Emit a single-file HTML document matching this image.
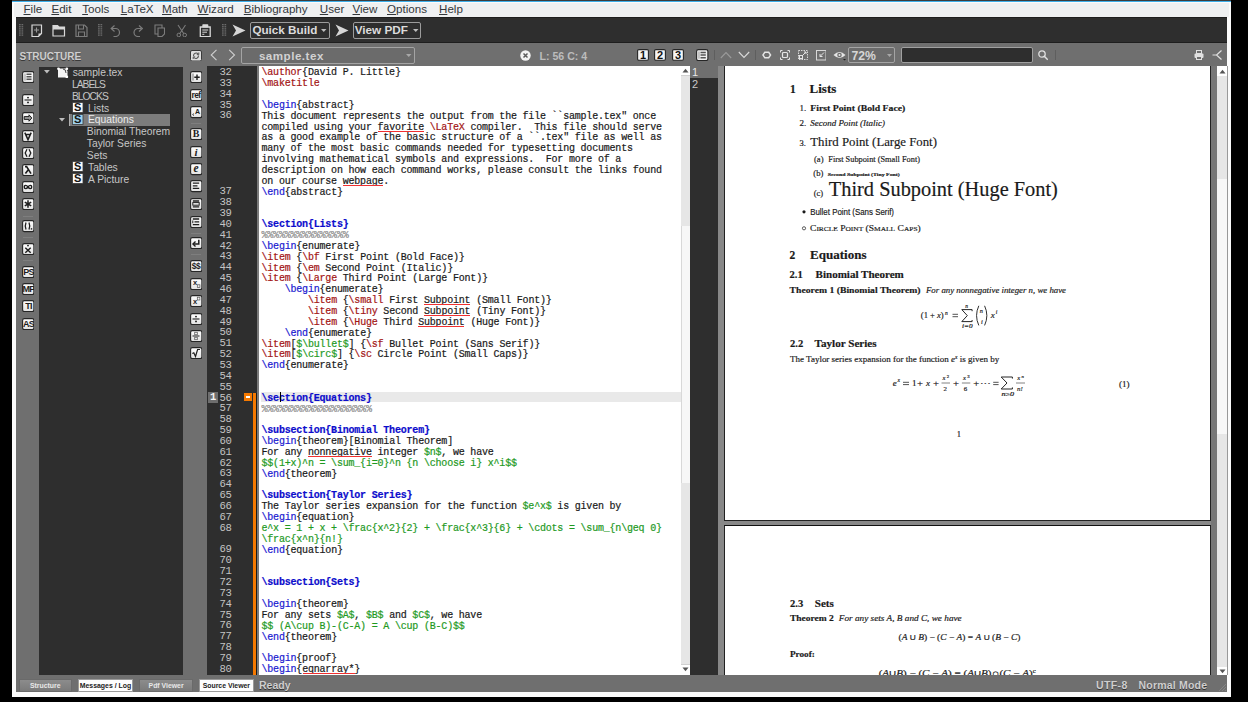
<!DOCTYPE html><html><head><meta charset="utf-8"><style>
*{margin:0;padding:0;box-sizing:border-box}
body{width:1248px;height:702px;background:#000;position:relative;overflow:hidden;font-family:"Liberation Sans",sans-serif}
body div{position:absolute;white-space:pre}
.mono{font-family:"Liberation Mono",monospace;font-size:10px;letter-spacing:-0.2px;line-height:11px;color:#1a1a1a;-webkit-text-stroke:0.2px currentColor}
.ln{font-family:"Liberation Mono",monospace;font-size:10.6px;letter-spacing:-0.4px;line-height:11px;color:#c4c4c4;text-align:right;width:30px}
.c{color:#a31515}
.b{color:#1a1ad0}
.s{color:#0c0ccc;font-weight:bold}
.g{color:#1f9a1f}
.p{color:#8a8a8a}
.u{}
</style></head><body><div style="left:12px;top:0px;width:1219px;height:1px;background:#3c3c3c"></div>
<div style="left:12px;top:1px;width:1219px;height:1px;background:#3daee9"></div>
<div style="left:12px;top:2px;width:1219px;height:695px;background:#fbfbfb"></div>
<div style="left:14px;top:3px;width:1215px;height:14px;background:#eff0f1"></div>
<div style="left:16px;top:17.3px;width:1211px;height:25.7px;background:#2e2e2e;border-top:1px solid #1e1e1e;border-bottom:1px solid #1e1e1e"></div>
<div style="left:16px;top:43px;width:1211px;height:649px;background:#6f6f6f"></div>
<div style="left:23.5px;top:1.6px;font-size:11.6px;color:#33373b;line-height:14px"><span style="text-decoration:underline;text-underline-offset:1.2px">F</span>ile</div>
<div style="left:51.4px;top:1.6px;font-size:11.6px;color:#33373b;line-height:14px"><span style="text-decoration:underline;text-underline-offset:1.2px">E</span>dit</div>
<div style="left:82.2px;top:1.6px;font-size:11.6px;color:#33373b;line-height:14px"><span style="text-decoration:underline;text-underline-offset:1.2px">T</span>ools</div>
<div style="left:120.7px;top:1.6px;font-size:11.6px;color:#33373b;line-height:14px"><span style="text-decoration:underline;text-underline-offset:1.2px">L</span>aTeX</div>
<div style="left:162px;top:1.6px;font-size:11.6px;color:#33373b;line-height:14px"><span style="text-decoration:underline;text-underline-offset:1.2px">M</span>ath</div>
<div style="left:197.6px;top:1.6px;font-size:11.6px;color:#33373b;line-height:14px"><span style="text-decoration:underline;text-underline-offset:1.2px">W</span>izard</div>
<div style="left:243.8px;top:1.6px;font-size:11.6px;color:#33373b;line-height:14px"><span style="text-decoration:underline;text-underline-offset:1.2px">B</span>ibliography</div>
<div style="left:319.8px;top:1.6px;font-size:11.6px;color:#33373b;line-height:14px"><span style="text-decoration:underline;text-underline-offset:1.2px">U</span>ser</div>
<div style="left:352.5px;top:1.6px;font-size:11.6px;color:#33373b;line-height:14px"><span style="text-decoration:underline;text-underline-offset:1.2px">V</span>iew</div>
<div style="left:387px;top:1.6px;font-size:11.6px;color:#33373b;line-height:14px"><span style="text-decoration:underline;text-underline-offset:1.2px">O</span>ptions</div>
<div style="left:439px;top:1.6px;font-size:11.6px;color:#33373b;line-height:14px"><span style="text-decoration:underline;text-underline-offset:1.2px">H</span>elp</div>
<div style="left:19.5px;top:50px;font-size:10px;font-weight:bold;color:#d0d0d0;text-shadow:0 1px 0 #3a3a3a;line-height:14px">STRUCTURE</div>
<div style="left:39px;top:66.5px;width:144px;height:608.5px;background:#2e2e2e"></div>
<div style="left:207px;top:66px;width:50px;height:609px;background:#2e2e2e"></div>
<div style="left:257px;top:66px;width:2px;height:609px;background:#7a7a7a"></div>
<div style="left:259px;top:66px;width:421.5px;height:609px;background:#fff"></div>
<div style="left:261px;top:391.83000000000004px;width:419.5px;height:10.250999999999976px;background:#e9e9e9"></div>
<div class="ln" style="left:201.5px;top:67.00px">32</div>
<div class="mono" style="left:261.5px;top:67.30px"><span class="c">\author</span>{David P. Little}</div>
<div class="ln" style="left:201.5px;top:77.85px">33</div>
<div class="mono" style="left:261.5px;top:78.15px"><span class="c">\maketitle</span></div>
<div class="ln" style="left:201.5px;top:88.70px">34</div>
<div class="ln" style="left:201.5px;top:99.55px">35</div>
<div class="mono" style="left:261.5px;top:99.85px"><span class="b">\begin</span>{abstract}</div>
<div class="ln" style="left:201.5px;top:110.40px">36</div>
<div class="mono" style="left:261.5px;top:110.70px">This document represents the output from the file ``sample.tex" once</div>
<div class="mono" style="left:261.5px;top:121.55px">compiled using your <span class="u">favorite</span> <span class="c">\LaTeX</span> compiler.  This file should serve</div>
<div class="mono" style="left:261.5px;top:132.41px">as a good example of the basic structure of a ``.tex" file as well as</div>
<div class="mono" style="left:261.5px;top:143.26px">many of the most basic commands needed for typesetting documents</div>
<div class="mono" style="left:261.5px;top:154.11px">involving mathematical symbols and expressions.  For more of a</div>
<div class="mono" style="left:261.5px;top:164.96px">description on how each command works, please consult the links found</div>
<div class="mono" style="left:261.5px;top:175.81px">on our course <span class="u">webpage</span>.</div>
<div class="ln" style="left:201.5px;top:186.36px">37</div>
<div class="mono" style="left:261.5px;top:186.66px"><span class="b">\end</span>{abstract}</div>
<div class="ln" style="left:201.5px;top:197.21px">38</div>
<div class="ln" style="left:201.5px;top:208.06px">39</div>
<div class="ln" style="left:201.5px;top:218.91px">40</div>
<div class="mono" style="left:261.5px;top:219.21px"><span class="s">\section{Lists}</span></div>
<div class="ln" style="left:201.5px;top:229.77px">41</div>
<div class="mono" style="left:261.5px;top:230.07px"><span class="p">%%%%%%%%%%%%%%%</span></div>
<div class="ln" style="left:201.5px;top:240.62px">42</div>
<div class="mono" style="left:261.5px;top:240.92px"><span class="b">\begin</span>{enumerate}</div>
<div class="ln" style="left:201.5px;top:251.47px">43</div>
<div class="mono" style="left:261.5px;top:251.77px"><span class="c">\item</span> {<span class="c">\bf</span> First Point (Bold Face)}</div>
<div class="ln" style="left:201.5px;top:262.32px">44</div>
<div class="mono" style="left:261.5px;top:262.62px"><span class="c">\item</span> {<span class="c">\em</span> Second Point (Italic)}</div>
<div class="ln" style="left:201.5px;top:273.17px">45</div>
<div class="mono" style="left:261.5px;top:273.47px"><span class="c">\item</span> {<span class="c">\Large</span> Third Point (Large Font)}</div>
<div class="ln" style="left:201.5px;top:284.02px">46</div>
<div class="mono" style="left:261.5px;top:284.32px">    <span class="b">\begin</span>{enumerate}</div>
<div class="ln" style="left:201.5px;top:294.87px">47</div>
<div class="mono" style="left:261.5px;top:295.17px">        <span class="c">\item</span> {<span class="c">\small</span> First <span class="u">Subpoint</span> (Small Font)}</div>
<div class="ln" style="left:201.5px;top:305.72px">48</div>
<div class="mono" style="left:261.5px;top:306.02px">        <span class="c">\item</span> {<span class="c">\tiny</span> Second <span class="u">Subpoint</span> (Tiny Font)}</div>
<div class="ln" style="left:201.5px;top:316.57px">49</div>
<div class="mono" style="left:261.5px;top:316.87px">        <span class="c">\item</span> {<span class="c">\Huge</span> Third <span class="u">Subpoint</span> (Huge Font)}</div>
<div class="ln" style="left:201.5px;top:327.42px">50</div>
<div class="mono" style="left:261.5px;top:327.72px">    <span class="b">\end</span>{enumerate}</div>
<div class="ln" style="left:201.5px;top:338.28px">51</div>
<div class="mono" style="left:261.5px;top:338.58px"><span class="c">\item</span>[<span class="g">$\bullet$</span>] {<span class="c">\sf</span> Bullet Point (Sans Serif)}</div>
<div class="ln" style="left:201.5px;top:349.13px">52</div>
<div class="mono" style="left:261.5px;top:349.43px"><span class="c">\item</span>[<span class="g">$\circ$</span>] {<span class="c">\sc</span> Circle Point (Small Caps)}</div>
<div class="ln" style="left:201.5px;top:359.98px">53</div>
<div class="mono" style="left:261.5px;top:360.28px"><span class="b">\end</span>{enumerate}</div>
<div class="ln" style="left:201.5px;top:370.83px">54</div>
<div class="ln" style="left:201.5px;top:381.68px">55</div>
<div class="ln" style="left:201.5px;top:392.53px">56</div>
<div class="mono" style="left:261.5px;top:392.83px"><span class="s">\section{Equations}</span></div>
<div class="ln" style="left:201.5px;top:403.38px">57</div>
<div class="mono" style="left:261.5px;top:403.68px"><span class="p">%%%%%%%%%%%%%%%%%%%</span></div>
<div class="ln" style="left:201.5px;top:414.23px">58</div>
<div class="ln" style="left:201.5px;top:425.08px">59</div>
<div class="mono" style="left:261.5px;top:425.38px"><span class="s">\subsection{Binomial Theorem}</span></div>
<div class="ln" style="left:201.5px;top:435.93px">60</div>
<div class="mono" style="left:261.5px;top:436.23px"><span class="b">\begin</span>{theorem}[Binomial Theorem]</div>
<div class="ln" style="left:201.5px;top:446.79px">61</div>
<div class="mono" style="left:261.5px;top:447.09px">For any <span class="u">nonnegative</span> integer <span class="g">$n$</span>, we have</div>
<div class="ln" style="left:201.5px;top:457.64px">62</div>
<div class="mono" style="left:261.5px;top:457.94px"><span class="g">$$(1+x)^n = \sum_{i=0}^n {n \choose i} x^i$$</span></div>
<div class="ln" style="left:201.5px;top:468.49px">63</div>
<div class="mono" style="left:261.5px;top:468.79px"><span class="b">\end</span>{theorem}</div>
<div class="ln" style="left:201.5px;top:479.34px">64</div>
<div class="ln" style="left:201.5px;top:490.19px">65</div>
<div class="mono" style="left:261.5px;top:490.49px"><span class="s">\subsection{Taylor Series}</span></div>
<div class="ln" style="left:201.5px;top:501.04px">66</div>
<div class="mono" style="left:261.5px;top:501.34px">The Taylor series expansion for the function <span class="g">$e^x$</span> is given by</div>
<div class="ln" style="left:201.5px;top:511.89px">67</div>
<div class="mono" style="left:261.5px;top:512.19px"><span class="b">\begin</span>{equation}</div>
<div class="ln" style="left:201.5px;top:522.74px">68</div>
<div class="mono" style="left:261.5px;top:523.04px"><span class="g">e^x = 1 + x + \frac{x^2}{2} + \frac{x^3}{6} + \cdots = \sum_{n\geq 0}</span></div>
<div class="mono" style="left:261.5px;top:533.89px"><span class="g">\frac{x^n}{n!}</span></div>
<div class="ln" style="left:201.5px;top:544.44px">69</div>
<div class="mono" style="left:261.5px;top:544.74px"><span class="b">\end</span>{equation}</div>
<div class="ln" style="left:201.5px;top:555.30px">70</div>
<div class="ln" style="left:201.5px;top:566.15px">71</div>
<div class="ln" style="left:201.5px;top:577.00px">72</div>
<div class="mono" style="left:261.5px;top:577.30px"><span class="s">\subsection{Sets}</span></div>
<div class="ln" style="left:201.5px;top:587.85px">73</div>
<div class="ln" style="left:201.5px;top:598.70px">74</div>
<div class="mono" style="left:261.5px;top:599.00px"><span class="b">\begin</span>{theorem}</div>
<div class="ln" style="left:201.5px;top:609.55px">75</div>
<div class="mono" style="left:261.5px;top:609.85px">For any sets <span class="g">$A$</span>, <span class="g">$B$</span> and <span class="g">$C$</span>, we have</div>
<div class="ln" style="left:201.5px;top:620.40px">76</div>
<div class="mono" style="left:261.5px;top:620.70px"><span class="g">$$ (A\cup B)-(C-A) = A \cup (B-C)$$</span></div>
<div class="ln" style="left:201.5px;top:631.25px">77</div>
<div class="mono" style="left:261.5px;top:631.55px"><span class="b">\end</span>{theorem}</div>
<div class="ln" style="left:201.5px;top:642.10px">78</div>
<div class="ln" style="left:201.5px;top:652.95px">79</div>
<div class="mono" style="left:261.5px;top:653.25px"><span class="b">\begin</span>{proof}</div>
<div class="ln" style="left:201.5px;top:663.81px">80</div>
<div class="mono" style="left:261.5px;top:664.11px"><span class="b">\begin</span>{<span class="u">eqnarray*</span>}</div>
<div style="left:377.6px;top:130.6px;width:46.19999999999999px;height:1.200000000000017px;background:#f03030"></div>
<div style="left:342.9px;top:184.9px;width:40.5px;height:1.1999999999999886px;background:#f03030"></div>
<div style="left:423.8px;top:304.2px;width:46.30000000000001px;height:1.1999999999999886px;background:#f03030"></div>
<div style="left:423.8px;top:315.1px;width:46.30000000000001px;height:1.1999999999999886px;background:#f03030"></div>
<div style="left:418.1px;top:325.9px;width:46.19999999999999px;height:1.2000000000000455px;background:#f03030"></div>
<div style="left:308.2px;top:456.2px;width:63.60000000000002px;height:1.1999999999999886px;background:#f03030"></div>
<div style="left:302.5px;top:673.2px;width:52.0px;height:1.1999999999999318px;background:#f03030"></div>
<div style="left:279.5px;top:391.83000000000004px;width:1.1000000000000227px;height:10.250999999999976px;background:#000"></div>
<div style="left:208px;top:391.8px;width:10.400000000000006px;height:10.800000000000011px;background:#6e6e6e"></div>
<div style="left:208px;top:391.8px;width:10.4px;text-align:center;font-family:'Liberation Mono',monospace;font-size:10.5px;line-height:11px;color:#f4f4f4;font-weight:bold">1</div>
<div style="left:244px;top:393px;width:7.699999999999989px;height:7.600000000000023px;background:#f57900"></div>
<div style="left:246px;top:396.3px;width:3.5999999999999943px;height:1.3000000000000114px;background:#fff"></div>
<div style="left:253.3px;top:393px;width:2.5px;height:282px;background:#f57900"></div>
<div style="left:255.8px;top:393px;width:1.1999999999999886px;height:282px;background:#1a1a1a"></div>
<div style="left:680.5px;top:66px;width:9.5px;height:609px;background:#f7f7f7;border-left:1px solid #d8d8d8"></div>
<div style="left:681px;top:66px;width:9px;height:9.5px;background:#fff"></div>
<div style="left:681px;top:75.5px;width:9px;height:150.5px;background:#e6e6e6"></div>
<div style="left:681px;top:482.5px;width:9px;height:181.5px;background:#e6e6e6"></div>
<div style="left:681px;top:664px;width:9px;height:11px;background:#fff"></div>
<div style="left:682px;top:68px;width:7px;height:5px;"><svg width="7" height="5" viewBox="0 0 7 5" style="position:absolute;left:0;top:0"><path d="M0.5 4.5 L3.5 0.8 L6.5 4.5 Z" fill="#555"/></svg></div>
<div style="left:682px;top:667px;width:7px;height:5px;"><svg width="7" height="5" viewBox="0 0 7 5" style="position:absolute;left:0;top:0"><path d="M0.5 0.5 L3.5 4.2 L6.5 0.5 Z" fill="#555"/></svg></div>
<div style="left:681px;top:75px;width:9px;height:1px;background:#d0d0d0"></div>
<div style="left:681px;top:663.5px;width:9px;height:1.0px;background:#d0d0d0"></div>
<div style="left:690px;top:66px;width:28px;height:609px;background:#2e2e2e"></div>
<div style="left:690px;top:66px;width:28px;height:12px;background:#6f6f6f"></div>
<div style="left:692px;top:65.5px;font-size:11px;color:#e8e8e8;line-height:13px">1</div>
<div style="left:692px;top:77.5px;font-size:11px;color:#c8c8c8;line-height:13px">2</div>
<div style="left:718px;top:66px;width:499px;height:609px;background:#888888"></div>
<div style="left:723.5px;top:66px;width:487.5px;height:455.29999999999995px;background:#fff;border:1px solid #222;border-top:none"></div>
<div style="left:723.5px;top:524.5px;width:487.5px;height:150.5px;background:#fff;border:1px solid #222;border-bottom:none;border-top:1.5px solid #111"></div>
<div style="left:1211px;top:66px;width:6px;height:609px;background:#777"></div>
<div style="left:1217px;top:66px;width:9.5px;height:609px;background:#f7f7f7"></div>
<div style="left:1217px;top:66px;width:9.5px;height:10px;background:#fff"></div>
<div style="left:1217px;top:76px;width:9.5px;height:103px;background:#e6e6e6"></div>
<div style="left:1217px;top:434px;width:9.5px;height:233px;background:#e6e6e6"></div>
<div style="left:1217px;top:667px;width:9.5px;height:8px;background:#fff"></div>
<div style="left:1218.5px;top:68.5px;width:7px;height:5px;"><svg width="7" height="5" viewBox="0 0 7 5" style="position:absolute;left:0;top:0"><path d="M0.5 4.5 L3.5 0.8 L6.5 4.5 Z" fill="#555"/></svg></div>
<div style="left:1218.5px;top:668.5px;width:7px;height:5px;"><svg width="7" height="5" viewBox="0 0 7 5" style="position:absolute;left:0;top:0"><path d="M0.5 0.5 L3.5 4.2 L6.5 0.5 Z" fill="#555"/></svg></div>
<div style="left:1226.5px;top:66px;width:1.0px;height:609px;background:#999"></div>
<div style="left:259px;top:678.5px;font-size:10.5px;font-weight:bold;color:#cfcfcf;text-shadow:0 1px 0 #333;line-height:13px">Ready</div>
<div style="left:1096px;top:678.5px;font-size:10.5px;letter-spacing:0.4px;font-weight:bold;color:#cfcfcf;text-shadow:0 1px 0 #333;line-height:13px">UTF-8</div>
<div style="left:1138.5px;top:678.5px;font-size:10.5px;letter-spacing:0.2px;font-weight:bold;color:#cfcfcf;text-shadow:0 1px 0 #333;line-height:13px">Normal Mode</div>
<div style="left:1218px;top:683px;width:9px;height:9px;"><svg width="9" height="9" viewBox="0 0 9 9" style="position:absolute;left:0;top:0"><path d="M8 1 L1 8 M8 4 L4 8 M8 7 L7 8" stroke="#8a8a8a" stroke-width="0.8"/></svg></div>
<div style="left:18.5px;top:679.2px;width:53.4px;height:12.5px;background:linear-gradient(#8c8c8c,#7a7a7a);color:#e8e8e8;border:1px solid #6a6a6a;font-size:6.9px;font-weight:bold;text-align:center;line-height:11px">Structure</div>
<div style="left:78px;top:679.2px;width:54.9px;height:12.5px;background:#fdfdfd;color:#222;border:1px solid #9a9a9a;font-size:6.9px;font-weight:bold;text-align:center;line-height:11px">Messages / Log</div>
<div style="left:139.2px;top:679.2px;width:53.8px;height:12.5px;background:linear-gradient(#8c8c8c,#7a7a7a);color:#e8e8e8;border:1px solid #6a6a6a;font-size:6.9px;font-weight:bold;text-align:center;line-height:11px">Pdf Viewer</div>
<div style="left:199.1px;top:679.2px;width:54.5px;height:12.5px;background:#fdfdfd;color:#222;border:1px solid #9a9a9a;font-size:6.9px;font-weight:bold;text-align:center;line-height:11px">Source Viewer</div>
<div style="left:19.4px;top:24.3px;width:5px;height:12.7px;"><svg width="5" height="12.7" viewBox="0 0 5 12.7" style="position:absolute;left:0;top:0"><rect x="0" y="0.0" width="1.7" height="1.3" fill="#6c6c6c"/><rect x="2.5" y="0.0" width="1.7" height="1.3" fill="#6c6c6c"/><rect x="0" y="2.1" width="1.7" height="1.3" fill="#6c6c6c"/><rect x="2.5" y="2.1" width="1.7" height="1.3" fill="#6c6c6c"/><rect x="0" y="4.2" width="1.7" height="1.3" fill="#6c6c6c"/><rect x="2.5" y="4.2" width="1.7" height="1.3" fill="#6c6c6c"/><rect x="0" y="6.3" width="1.7" height="1.3" fill="#6c6c6c"/><rect x="2.5" y="6.3" width="1.7" height="1.3" fill="#6c6c6c"/><rect x="0" y="8.4" width="1.7" height="1.3" fill="#6c6c6c"/><rect x="2.5" y="8.4" width="1.7" height="1.3" fill="#6c6c6c"/><rect x="0" y="10.5" width="1.7" height="1.3" fill="#6c6c6c"/><rect x="2.5" y="10.5" width="1.7" height="1.3" fill="#6c6c6c"/></svg></div>
<div style="left:98.2px;top:24.3px;width:5px;height:12.7px;"><svg width="5" height="12.7" viewBox="0 0 5 12.7" style="position:absolute;left:0;top:0"><rect x="0" y="0.0" width="1.7" height="1.3" fill="#6c6c6c"/><rect x="2.5" y="0.0" width="1.7" height="1.3" fill="#6c6c6c"/><rect x="0" y="2.1" width="1.7" height="1.3" fill="#6c6c6c"/><rect x="2.5" y="2.1" width="1.7" height="1.3" fill="#6c6c6c"/><rect x="0" y="4.2" width="1.7" height="1.3" fill="#6c6c6c"/><rect x="2.5" y="4.2" width="1.7" height="1.3" fill="#6c6c6c"/><rect x="0" y="6.3" width="1.7" height="1.3" fill="#6c6c6c"/><rect x="2.5" y="6.3" width="1.7" height="1.3" fill="#6c6c6c"/><rect x="0" y="8.4" width="1.7" height="1.3" fill="#6c6c6c"/><rect x="2.5" y="8.4" width="1.7" height="1.3" fill="#6c6c6c"/><rect x="0" y="10.5" width="1.7" height="1.3" fill="#6c6c6c"/><rect x="2.5" y="10.5" width="1.7" height="1.3" fill="#6c6c6c"/></svg></div>
<div style="left:222px;top:24.3px;width:5px;height:12.7px;"><svg width="5" height="12.7" viewBox="0 0 5 12.7" style="position:absolute;left:0;top:0"><rect x="0" y="0.0" width="1.7" height="1.3" fill="#6c6c6c"/><rect x="2.5" y="0.0" width="1.7" height="1.3" fill="#6c6c6c"/><rect x="0" y="2.1" width="1.7" height="1.3" fill="#6c6c6c"/><rect x="2.5" y="2.1" width="1.7" height="1.3" fill="#6c6c6c"/><rect x="0" y="4.2" width="1.7" height="1.3" fill="#6c6c6c"/><rect x="2.5" y="4.2" width="1.7" height="1.3" fill="#6c6c6c"/><rect x="0" y="6.3" width="1.7" height="1.3" fill="#6c6c6c"/><rect x="2.5" y="6.3" width="1.7" height="1.3" fill="#6c6c6c"/><rect x="0" y="8.4" width="1.7" height="1.3" fill="#6c6c6c"/><rect x="2.5" y="8.4" width="1.7" height="1.3" fill="#6c6c6c"/><rect x="0" y="10.5" width="1.7" height="1.3" fill="#6c6c6c"/><rect x="2.5" y="10.5" width="1.7" height="1.3" fill="#6c6c6c"/></svg></div>
<div style="left:30.5px;top:23.5px;width:12px;height:13.5px;"><svg width="12" height="13.5" viewBox="0 0 12 13.5" style="position:absolute;left:0;top:0"><path d="M1 1 H10.5 V9.5 L7.5 12.5 H1 Z" fill="none" stroke="#d9d9d9" stroke-width="1.2"/><path d="M7.5 12.5 V9.5 H10.5 Z" fill="#d9d9d9"/><path d="M5.5 3.5 V8.5 M3 6 H8" stroke="#9a9a9a" stroke-width="1.1"/></svg></div>
<div style="left:51.5px;top:23.5px;width:14px;height:13.5px;"><svg width="14" height="13.5" viewBox="0 0 14 13.5" style="position:absolute;left:0;top:0"><path d="M1 1.5 H5.5 L7 3 H12.5 V12 H1 Z" fill="none" stroke="#d9d9d9" stroke-width="1.2"/><path d="M1 1.5 H5.5 L7 3 H12.5 V5.5 H1 Z" fill="#d9d9d9"/></svg></div>
<div style="left:74.5px;top:23.5px;width:13px;height:13.5px;"><svg width="13" height="13.5" viewBox="0 0 13 13.5" style="position:absolute;left:0;top:0"><path d="M1 1 H9.5 L12 3.5 V12.5 H1 Z" fill="none" stroke="#7c7c7c" stroke-width="1.2"/><path d="M3.5 1 V5 H8.5 V1 M3.5 12.5 V8 H9.5 V12.5" fill="none" stroke="#7c7c7c" stroke-width="1.1"/></svg></div>
<div style="left:110.2px;top:23.5px;width:10.5px;height:13.5px;"><svg width="10.5" height="13.5" viewBox="0 0 10.5 13.5" style="position:absolute;left:0;top:0"><path d="M2 4.5 H5.5 A4 4 0 0 1 5.5 12.5 H3.5" fill="none" stroke="#7c7c7c" stroke-width="1.2"/><path d="M4.5 1.5 L1.2 4.5 L4.5 7.5" fill="none" stroke="#7c7c7c" stroke-width="1.2"/></svg></div>
<div style="left:132.5px;top:23.5px;width:10.5px;height:13.5px;"><svg width="10.5" height="13.5" viewBox="0 0 10.5 13.5" style="position:absolute;left:0;top:0"><path d="M8.5 4.5 H5 A4 4 0 0 0 5 12.5 H7" fill="none" stroke="#7c7c7c" stroke-width="1.2"/><path d="M6 1.5 L9.3 4.5 L6 7.5" fill="none" stroke="#7c7c7c" stroke-width="1.2"/></svg></div>
<div style="left:153.5px;top:23.5px;width:11.5px;height:13.5px;"><svg width="11.5" height="13.5" viewBox="0 0 11.5 13.5" style="position:absolute;left:0;top:0"><path d="M1 1 H8 V10 H1 Z" fill="none" stroke="#7c7c7c" stroke-width="1.1"/><path d="M4 4 H10.5 V10 L8 12.5 H4 Z" fill="#2e2e2e" stroke="#7c7c7c" stroke-width="1.1"/></svg></div>
<div style="left:176.2px;top:23.5px;width:11.5px;height:13.5px;"><svg width="11.5" height="13.5" viewBox="0 0 11.5 13.5" style="position:absolute;left:0;top:0"><path d="M2 1 L8 10 M9.5 1 L3.5 10" stroke="#7c7c7c" stroke-width="1.1" fill="none"/><circle cx="2.8" cy="11" r="1.8" fill="none" stroke="#7c7c7c" stroke-width="1"/><circle cx="8.7" cy="11" r="1.8" fill="none" stroke="#7c7c7c" stroke-width="1"/></svg></div>
<div style="left:198.5px;top:23.5px;width:12.5px;height:13.5px;"><svg width="12.5" height="13.5" viewBox="0 0 12.5 13.5" style="position:absolute;left:0;top:0"><path d="M1.3 3 H11.2 V12.6 H1.3 Z" fill="none" stroke="#d9d9d9" stroke-width="1.3"/><rect x="3.3" y="0.3" width="6" height="3.2" rx="0.8" fill="#d9d9d9"/><path d="M3.3 6 H9.2 M3.3 8.2 H8 M3.3 10.3 H5.3" stroke="#d9d9d9" stroke-width="1"/></svg></div>
<div style="left:232px;top:24px;width:14px;height:13px;"><svg width="14" height="13" viewBox="0 0 14 13" style="position:absolute;left:0;top:0"><path d="M0.5 0.5 L13.5 6.5 L0.5 12.5 L4 6.5 Z" fill="#d6d6d6"/></svg></div>
<div style="left:335px;top:24px;width:14px;height:13px;"><svg width="14" height="13" viewBox="0 0 14 13" style="position:absolute;left:0;top:0"><path d="M0.5 0.5 L13.5 6.5 L0.5 12.5 L4 6.5 Z" fill="#d6d6d6"/></svg></div>
<div style="left:250px;top:22px;width:80.2px;height:16.8px;border:1px solid #9c9c9c;border-radius:2px"></div>
<div style="left:252.4px;top:22.8px;font-size:11.7px;letter-spacing:0px;font-weight:bold;color:#dcdcdc;line-height:14px">Quick Build</div>
<div style="left:320.5px;top:28.5px;width:6px;height:4px;"><svg width="6" height="4" viewBox="0 0 6 4" style="position:absolute;left:0;top:0"><path d="M0 0 H5.5 L2.75 3 Z" fill="#bdbdbd"/></svg></div>
<div style="left:352.6px;top:22px;width:68.4px;height:16.8px;border:1px solid #9c9c9c;border-radius:2px"></div>
<div style="left:354.7px;top:22.8px;font-size:11.75px;letter-spacing:0px;font-weight:bold;color:#dcdcdc;line-height:14px">View PDF</div>
<div style="left:412.5px;top:28.5px;width:6px;height:4px;"><svg width="6" height="4" viewBox="0 0 6 4" style="position:absolute;left:0;top:0"><path d="M0 0 H5.5 L2.75 3 Z" fill="#bdbdbd"/></svg></div>
<div style="left:189.5px;top:49.5px;width:12px;height:11.5px;"><svg width="12" height="11.5" viewBox="0 0 12 11.5" style="position:absolute;left:0;top:0"><rect x="0.5" y="0.5" width="11" height="10.5" rx="1.5" fill="#dedede" stroke="#3a3a3a"/><path d="M3.5 6 A2.7 2.7 0 0 1 8.2 4 M8.5 5.5 A2.7 2.7 0 0 1 3.8 7.5" fill="none" stroke="#555" stroke-width="1.1"/><path d="M8.8 2.5 V4.6 H6.8 M3.2 9 V6.9 H5.2" fill="none" stroke="#555" stroke-width="1"/></svg></div>
<div style="left:209.5px;top:49px;width:8px;height:12px;"><svg width="8" height="12" viewBox="0 0 8 12" style="position:absolute;left:0;top:0"><path d="M6.5 0.8 L1.2 6 L6.5 11.2" fill="none" stroke="#cfcfcf" stroke-width="1.1"/></svg></div>
<div style="left:227.5px;top:49px;width:8px;height:12px;"><svg width="8" height="12" viewBox="0 0 8 12" style="position:absolute;left:0;top:0"><path d="M1.2 0.8 L6.5 6 L1.2 11.2" fill="none" stroke="#cfcfcf" stroke-width="1.1"/></svg></div>
<div style="left:241.2px;top:47px;width:173.6px;height:16.5px;border:1px solid #a4a4a4;border-radius:2px;background:#6b6b6b"></div>
<div style="left:258.9px;top:48.5px;font-size:11.6px;letter-spacing:0.5px;font-weight:bold;color:#d2d2d2;line-height:14px">sample.tex</div>
<div style="left:406px;top:53.5px;width:6px;height:3.5px;"><svg width="6" height="3.5" viewBox="0 0 6 3.5" style="position:absolute;left:0;top:0"><path d="M0 0 H5.5 L2.75 3 Z" fill="#a8a8a8"/></svg></div>
<div style="left:519.5px;top:49.5px;width:11px;height:11px;"><svg width="11" height="11" viewBox="0 0 11 11" style="position:absolute;left:0;top:0"><circle cx="5.5" cy="5.5" r="5.2" fill="#f2f2f2"/><path d="M3.5 3.5 L7.5 7.5 M7.5 3.5 L3.5 7.5" stroke="#5a5a5a" stroke-width="1.5"/></svg></div>
<div style="left:539.5px;top:48.5px;font-size:10.6px;font-weight:bold;color:#bcbcbc;line-height:14px">L: 56 C: 4</div>
<div style="left:636.6px;top:49px;width:12px;height:11.8px;"><svg width="12" height="11.8" viewBox="0 0 12 11.8" style="position:absolute;left:0;top:0"><rect x="0.6" y="0.6" width="10.8" height="10.6" rx="1.2" fill="#f6f6f6" stroke="#262626" stroke-width="1.1"/><text x="6" y="10" text-anchor="middle" font-family="Liberation Sans" font-size="11" font-weight="bold" fill="#111">1</text></svg></div>
<div style="left:654.4px;top:49px;width:12px;height:11.8px;"><svg width="12" height="11.8" viewBox="0 0 12 11.8" style="position:absolute;left:0;top:0"><rect x="0.6" y="0.6" width="10.8" height="10.6" rx="1.2" fill="#f6f6f6" stroke="#262626" stroke-width="1.1"/><text x="6" y="10" text-anchor="middle" font-family="Liberation Sans" font-size="11" font-weight="bold" fill="#111">2</text></svg></div>
<div style="left:672px;top:49px;width:12px;height:11.8px;"><svg width="12" height="11.8" viewBox="0 0 12 11.8" style="position:absolute;left:0;top:0"><rect x="0.6" y="0.6" width="10.8" height="10.6" rx="1.2" fill="#f6f6f6" stroke="#262626" stroke-width="1.1"/><text x="6" y="10" text-anchor="middle" font-family="Liberation Sans" font-size="11" font-weight="bold" fill="#111">3</text></svg></div>
<div style="left:696px;top:49px;width:12.5px;height:12.2px;"><svg width="12.5" height="12.2" viewBox="0 0 12.5 12.2" style="position:absolute;left:0;top:0"><rect x="0.6" y="0.6" width="11.3" height="11" rx="1.8" fill="#f0f0f0" stroke="#262626" stroke-width="1.1"/><path d="M3 2.5 V9.7" stroke="#9a9a9a" stroke-width="1"/><path d="M4.5 3.4 H9.8 M4.5 6.1 H9.8 M4.5 8.8 H9.8" stroke="#555" stroke-width="1.5"/></svg></div>
<div style="left:714px;top:50px;width:1px;height:10px;background:#5e5e5e"></div>
<div style="left:719.5px;top:51px;width:12px;height:8px;"><svg width="12" height="8" viewBox="0 0 12 8" style="position:absolute;left:0;top:0"><path d="M0.8 7 L6 1.5 L11.2 7" fill="none" stroke="#9a9a9a" stroke-width="1.1"/></svg></div>
<div style="left:737.5px;top:51px;width:12px;height:8px;"><svg width="12" height="8" viewBox="0 0 12 8" style="position:absolute;left:0;top:0"><path d="M0.8 1 L6 6.5 L11.2 1" fill="none" stroke="#dadada" stroke-width="1.1"/></svg></div>
<div style="left:755px;top:50px;width:1px;height:10px;background:#5e5e5e"></div>
<div style="left:762px;top:51px;width:9.5px;height:8px;"><svg width="9.5" height="8" viewBox="0 0 9.5 8" style="position:absolute;left:0;top:0"><path d="M2.8 1.3 H6.7 L8.6 4 L6.7 6.7 H2.8 L0.9 4 Z" fill="none" stroke="#e4e4e4" stroke-width="1.4"/></svg></div>
<div style="left:779.5px;top:50px;width:10px;height:10px;"><svg width="10" height="10" viewBox="0 0 10 10" style="position:absolute;left:0;top:0"><rect x="2.5" y="2.5" width="5" height="5" rx="1" fill="none" stroke="#e4e4e4" stroke-width="1.2"/><path d="M0.5 0.5 H2.5 M0.5 0.5 V2.5 M9.5 0.5 H7.5 M9.5 0.5 V2.5 M0.5 9.5 H2.5 M0.5 9.5 V7.5 M9.5 9.5 H7.5 M9.5 9.5 V7.5" stroke="#e4e4e4" stroke-width="1"/></svg></div>
<div style="left:797.5px;top:50px;width:10px;height:10px;"><svg width="10" height="10" viewBox="0 0 10 10" style="position:absolute;left:0;top:0"><rect x="0.5" y="0.5" width="9" height="9" fill="none" stroke="#d8d8d8" stroke-width="1" stroke-dasharray="1.5 1"/><rect x="1.5" y="5.5" width="3" height="3" fill="none" stroke="#e4e4e4" stroke-width="1"/><path d="M4.5 5.5 L8 2 M6 2 H8 V4" stroke="#e4e4e4" stroke-width="1" fill="none"/></svg></div>
<div style="left:815.5px;top:50px;width:10.5px;height:10.5px;"><svg width="10.5" height="10.5" viewBox="0 0 10.5 10.5" style="position:absolute;left:0;top:0"><rect x="0.5" y="0.5" width="9.5" height="9.5" fill="none" stroke="#d8d8d8" stroke-width="1"/><path d="M8 2.5 L4 6.5 M4 4 V6.5 H6.5" stroke="#e4e4e4" stroke-width="1" fill="none"/></svg></div>
<div style="left:832.5px;top:50px;width:13.5px;height:11px;"><svg width="13.5" height="11" viewBox="0 0 13.5 11" style="position:absolute;left:0;top:0"><path d="M0.5 5 Q6.5 -1 12.5 5 Q6.5 11 0.5 5 Z" fill="#e4e4e4"/><circle cx="6.5" cy="5" r="2.3" fill="#6f6f6f"/><circle cx="6.5" cy="5" r="1" fill="#e4e4e4"/><path d="M10 9 H13 L11.5 10.5 Z" fill="#222"/></svg></div>
<div style="left:848.4px;top:47px;width:47.1px;height:16px;border:1px solid #a4a4a4;border-radius:2px;background:#6b6b6b"></div>
<div style="left:851.4px;top:48.5px;font-size:12.2px;font-weight:bold;color:#d6d6d6;line-height:14px">72%</div>
<div style="left:886.8px;top:53.5px;width:5.5px;height:3.5px;"><svg width="5.5" height="3.5" viewBox="0 0 5.5 3.5" style="position:absolute;left:0;top:0"><path d="M0 0 H5 L2.5 3 Z" fill="#a8a8a8"/></svg></div>
<div style="left:901px;top:47px;width:132px;height:15.5px;border:1px solid #a0a0a0;border-radius:2px;background:#2e2e2e"></div>
<div style="left:1037.5px;top:50px;width:10.5px;height:10.5px;"><svg width="10.5" height="10.5" viewBox="0 0 10.5 10.5" style="position:absolute;left:0;top:0"><circle cx="4" cy="4" r="3.2" fill="none" stroke="#e0e0e0" stroke-width="1.3"/><path d="M6.3 6.3 L9.8 9.8" stroke="#e0e0e0" stroke-width="1.5"/></svg></div>
<div style="left:1054.5px;top:50px;width:1.0px;height:10px;background:#5e5e5e"></div>
<div style="left:1193.5px;top:50px;width:10px;height:10px;"><svg width="10" height="10" viewBox="0 0 10 10" style="position:absolute;left:0;top:0"><rect x="2.5" y="0.5" width="5" height="3" fill="none" stroke="#e0e0e0" stroke-width="1"/><rect x="0.5" y="3.5" width="9" height="4.5" rx="1" fill="#e0e0e0"/><rect x="2.5" y="6.5" width="5" height="3" fill="#6f6f6f" stroke="#e0e0e0" stroke-width="1"/></svg></div>
<div style="left:1211.5px;top:50px;width:10px;height:10px;"><svg width="10" height="10" viewBox="0 0 10 10" style="position:absolute;left:0;top:0"><path d="M9.5 0.5 L4.5 5 L9.5 9.5 M0.5 5 H4.5" fill="none" stroke="#e0e0e0" stroke-width="1.2"/></svg></div>
<div style="left:43.8px;top:70px;width:6px;height:4px;"><svg width="6" height="4" viewBox="0 0 6 4" style="position:absolute;left:0;top:0"><path d="M0 0 H5.8 L2.9 3.6 Z" fill="#bdbdbd"/></svg></div>
<div style="left:57px;top:66.8px;width:11.5px;height:11.2px;"><svg width="11.5" height="11.2" viewBox="0 0 11.5 11.2" style="position:absolute;left:0;top:0"><path d="M1 1.5 H8 L10.5 4 V10.5 H1 Z" fill="#f4f4f4"/><circle cx="1.5" cy="1.8" r="1.4" fill="#fff"/><circle cx="9.8" cy="1.8" r="1.4" fill="#fff"/><circle cx="9.8" cy="9.8" r="1.4" fill="#fff"/><path d="M6 2 Q9 2 9 6" stroke="#333" stroke-width="0.9" fill="none"/></svg></div>
<div style="left:69.1px;top:114px;width:100.6px;height:12.200000000000003px;background:#7c7c7c;border-left:1.5px solid #b0b0b0"></div>
<div style="left:58.8px;top:118px;width:6.2px;height:4px;"><svg width="6.2" height="4" viewBox="0 0 6.2 4" style="position:absolute;left:0;top:0"><path d="M0 0 H6 L3 3.4 Z" fill="#bdbdbd"/></svg></div>
<div style="left:72.7px;top:66.2px;font-size:10.3px;letter-spacing:0;color:#c6c6c6;line-height:13px">sample.tex</div>
<div style="left:72px;top:78.02000000000001px;font-size:10.3px;letter-spacing:-1px;color:#c6c6c6;line-height:13px">LABELS</div>
<div style="left:72px;top:89.84px;font-size:10.3px;letter-spacing:-1px;color:#c6c6c6;line-height:13px">BLOCKS</div>
<div style="left:72px;top:101.9px;width:11.5px;height:11px;"><svg width="11.5" height="11" viewBox="0 0 11.5 11" style="position:absolute;left:0;top:0"><rect x="0.5" y="0.5" width="10.5" height="10" fill="#fafafa" stroke="#3a3a3a" stroke-width="0.8"/><text x="5.75" y="9.3" text-anchor="middle" font-family="Liberation Sans" font-size="11" font-weight="bold" fill="#151515">S</text></svg></div>
<div style="left:88px;top:101.66px;font-size:10.3px;letter-spacing:0;color:#c6c6c6;line-height:13px">Lists</div>
<div style="left:72px;top:113.7px;width:11.5px;height:11px;"><svg width="11.5" height="11" viewBox="0 0 11.5 11" style="position:absolute;left:0;top:0"><rect x="0.5" y="0.5" width="10.5" height="10" fill="#9fd3ee" stroke="#3a3a3a" stroke-width="0.8"/><text x="5.75" y="9.3" text-anchor="middle" font-family="Liberation Sans" font-size="11" font-weight="bold" fill="#151515">S</text></svg></div>
<div style="left:88px;top:113.48px;font-size:10.3px;letter-spacing:0;color:#ececec;line-height:13px">Equations</div>
<div style="left:86.8px;top:125.30000000000001px;font-size:10.3px;letter-spacing:0;color:#c6c6c6;line-height:13px">Binomial Theorem</div>
<div style="left:86.8px;top:137.12px;font-size:10.3px;letter-spacing:0;color:#c6c6c6;line-height:13px">Taylor Series</div>
<div style="left:86.8px;top:148.94px;font-size:10.3px;letter-spacing:0;color:#c6c6c6;line-height:13px">Sets</div>
<div style="left:72px;top:161.0px;width:11.5px;height:11px;"><svg width="11.5" height="11" viewBox="0 0 11.5 11" style="position:absolute;left:0;top:0"><rect x="0.5" y="0.5" width="10.5" height="10" fill="#fafafa" stroke="#3a3a3a" stroke-width="0.8"/><text x="5.75" y="9.3" text-anchor="middle" font-family="Liberation Sans" font-size="11" font-weight="bold" fill="#151515">S</text></svg></div>
<div style="left:88px;top:160.76px;font-size:10.3px;letter-spacing:0;color:#c6c6c6;line-height:13px">Tables</div>
<div style="left:72px;top:172.8px;width:11.5px;height:11px;"><svg width="11.5" height="11" viewBox="0 0 11.5 11" style="position:absolute;left:0;top:0"><rect x="0.5" y="0.5" width="10.5" height="10" fill="#fafafa" stroke="#3a3a3a" stroke-width="0.8"/><text x="5.75" y="9.3" text-anchor="middle" font-family="Liberation Sans" font-size="11" font-weight="bold" fill="#151515">S</text></svg></div>
<div style="left:88px;top:172.57999999999998px;font-size:10.3px;letter-spacing:0;color:#c6c6c6;line-height:13px">A Picture</div>
<svg width="0" height="0" style="position:absolute"><defs><linearGradient id="gw" x1="0" y1="0" x2="0" y2="1"><stop offset="0" stop-color="#ffffff"/><stop offset="1" stop-color="#e2e2e2"/></linearGradient></defs></svg>
<div style="left:21.6px;top:71.2px;width:12.5px;height:12.2px;"><svg width="12.5" height="12.2" viewBox="0 0 12.5 12.2" style="position:absolute;left:0;top:0"><rect x="0.6" y="0.6" width="11.3" height="11.0" rx="1.8" fill="url(#gw)" stroke="#262626" stroke-width="1.1"/><path d="M3 2.5 V9.5" stroke="#9a9a9a" stroke-width="1"/><path d="M4.5 3.3 H9.5 M4.5 5.8 H9.5 M4.5 8.3 H9.5" stroke="#555" stroke-width="1.5"/></svg></div>
<div style="left:23px;top:89px;width:10px;height:1px;background:#7e7e7e"></div>
<div style="left:21.6px;top:93.6px;width:12.5px;height:12.2px;"><svg width="12.5" height="12.2" viewBox="0 0 12.5 12.2" style="position:absolute;left:0;top:0"><rect x="0.6" y="0.6" width="11.3" height="11.0" rx="1.8" fill="url(#gw)" stroke="#262626" stroke-width="1.1"/><path d="M2.5 6 H9.5" stroke="#1e1e1e" stroke-width="1.1"/><circle cx="6" cy="3.6" r="0.95" fill="#1e1e1e"/><circle cx="6" cy="8.4" r="0.95" fill="#1e1e1e"/></svg></div>
<div style="left:21.6px;top:111.6px;width:12.5px;height:12.2px;"><svg width="12.5" height="12.2" viewBox="0 0 12.5 12.2" style="position:absolute;left:0;top:0"><rect x="0.6" y="0.6" width="11.3" height="11.0" rx="1.8" fill="url(#gw)" stroke="#262626" stroke-width="1.1"/><path d="M2.2 4.6 H7 V2.8 L9.8 6 L7 9.2 V7.4 H2.2 Z" fill="#9c9c9c" stroke="#1e1e1e" stroke-width="1"/></svg></div>
<div style="left:21.6px;top:129.5px;width:12.5px;height:12.2px;"><svg width="12.5" height="12.2" viewBox="0 0 12.5 12.2" style="position:absolute;left:0;top:0"><rect x="0.6" y="0.6" width="11.3" height="11.0" rx="1.8" fill="url(#gw)" stroke="#262626" stroke-width="1.1"/><path d="M2.8 2.6 L6 9.6 L9.2 2.6 M3.9 4.6 H8.1" fill="none" stroke="#1e1e1e" stroke-width="1.5"/></svg></div>
<div style="left:21.6px;top:146.6px;width:12.5px;height:12.2px;"><svg width="12.5" height="12.2" viewBox="0 0 12.5 12.2" style="position:absolute;left:0;top:0"><rect x="0.6" y="0.6" width="11.3" height="11.0" rx="1.8" fill="url(#gw)" stroke="#262626" stroke-width="1.1"/><path d="M5 2.3 L3.2 6 L5 9.7 M7 2.3 L8.8 6 L7 9.7" fill="none" stroke="#1e1e1e" stroke-width="1.3"/></svg></div>
<div style="left:21.6px;top:163.7px;width:12.5px;height:12.2px;"><svg width="12.5" height="12.2" viewBox="0 0 12.5 12.2" style="position:absolute;left:0;top:0"><rect x="0.6" y="0.6" width="11.3" height="11.0" rx="1.8" fill="url(#gw)" stroke="#262626" stroke-width="1.1"/><path d="M3 2.6 H4.6 L9 9.6 M6.3 5.8 L3.4 9.6" fill="none" stroke="#1e1e1e" stroke-width="1.6"/></svg></div>
<div style="left:21.6px;top:181px;width:12.5px;height:12.2px;"><svg width="12.5" height="12.2" viewBox="0 0 12.5 12.2" style="position:absolute;left:0;top:0"><rect x="0.6" y="0.6" width="11.3" height="11.0" rx="1.8" fill="url(#gw)" stroke="#262626" stroke-width="1.1"/><path d="M6 6 C4.5 3.8 2.3 3.8 2.3 6 C2.3 8.2 4.5 8.2 6 6 C7.5 3.8 9.7 3.8 9.7 6 C9.7 8.2 7.5 8.2 6 6 Z" fill="none" stroke="#1e1e1e" stroke-width="1.4"/></svg></div>
<div style="left:21.6px;top:197.6px;width:12.5px;height:12.2px;"><svg width="12.5" height="12.2" viewBox="0 0 12.5 12.2" style="position:absolute;left:0;top:0"><rect x="0.6" y="0.6" width="11.3" height="11.0" rx="1.8" fill="url(#gw)" stroke="#262626" stroke-width="1.1"/><path d="M6 2.2 V9.8 M2.8 4.1 L9.2 7.9 M9.2 4.1 L2.8 7.9" fill="none" stroke="#1e1e1e" stroke-width="1.5"/></svg></div>
<div style="left:23px;top:215.5px;width:10px;height:1.0px;background:#7e7e7e"></div>
<div style="left:21.6px;top:220.4px;width:12.5px;height:12.2px;"><svg width="12.5" height="12.2" viewBox="0 0 12.5 12.2" style="position:absolute;left:0;top:0"><rect x="0.6" y="0.6" width="11.3" height="11.0" rx="1.8" fill="url(#gw)" stroke="#262626" stroke-width="1.1"/><path d="M4 2.5 Q2.5 6 4 9.5 M7 2.5 Q8.5 6 7 9.5" fill="none" stroke="#1e1e1e" stroke-width="1.3"/><rect x="8.8" y="8.2" width="1.4" height="1.4" fill="#1e1e1e"/></svg></div>
<div style="left:23px;top:237px;width:10px;height:1px;background:#7e7e7e"></div>
<div style="left:21.6px;top:242.5px;width:12.5px;height:12.2px;"><svg width="12.5" height="12.2" viewBox="0 0 12.5 12.2" style="position:absolute;left:0;top:0"><rect x="0.6" y="0.6" width="11.3" height="11.0" rx="1.8" fill="url(#gw)" stroke="#262626" stroke-width="1.1"/><circle cx="6" cy="2.6" r="0.9" fill="#1e1e1e"/><path d="M3.3 4.8 L8.7 9.8 M8.7 4.8 L3.3 9.8" fill="none" stroke="#1e1e1e" stroke-width="1.4"/></svg></div>
<div style="left:23px;top:259.5px;width:10px;height:1.0px;background:#7e7e7e"></div>
<div style="left:21.6px;top:266px;width:12.5px;height:12.2px;"><svg width="12.5" height="12.2" viewBox="0 0 12.5 12.2" style="position:absolute;left:0;top:0"><rect x="0.6" y="0.6" width="11.3" height="11.0" rx="1.8" fill="url(#gw)" stroke="#262626" stroke-width="1.1"/><text x="6.4" y="8.8" text-anchor="middle" font-family="Liberation Sans" font-size="9" font-weight="bold" font-style="normal" letter-spacing="-0.9" fill="#1e1e1e">PS</text></svg></div>
<div style="left:21.6px;top:283px;width:12.5px;height:12.2px;"><svg width="12.5" height="12.2" viewBox="0 0 12.5 12.2" style="position:absolute;left:0;top:0"><rect x="0.6" y="0.6" width="11.3" height="11.0" rx="1.8" fill="url(#gw)" stroke="#262626" stroke-width="1.1"/><text x="6.4" y="8.8" text-anchor="middle" font-family="Liberation Sans" font-size="9" font-weight="bold" font-style="normal" letter-spacing="-0.9" fill="#1e1e1e">MP</text></svg></div>
<div style="left:21.6px;top:300px;width:12.5px;height:12.2px;"><svg width="12.5" height="12.2" viewBox="0 0 12.5 12.2" style="position:absolute;left:0;top:0"><rect x="0.6" y="0.6" width="11.3" height="11.0" rx="1.8" fill="url(#gw)" stroke="#262626" stroke-width="1.1"/><text x="6.4" y="8.8" text-anchor="middle" font-family="Liberation Sans" font-size="9" font-weight="bold" font-style="normal" letter-spacing="-0.9" fill="#1e1e1e">TI</text></svg></div>
<div style="left:21.6px;top:317.7px;width:12.5px;height:12.2px;"><svg width="12.5" height="12.2" viewBox="0 0 12.5 12.2" style="position:absolute;left:0;top:0"><rect x="0.6" y="0.6" width="11.3" height="11.0" rx="1.8" fill="url(#gw)" stroke="#262626" stroke-width="1.1"/><text x="6.4" y="8.8" text-anchor="middle" font-family="Liberation Sans" font-size="9" font-weight="bold" font-style="normal" letter-spacing="-0.9" fill="#1e1e1e">AS</text></svg></div>
<div style="left:189.6px;top:71.2px;width:12.5px;height:12.2px;"><svg width="12.5" height="12.2" viewBox="0 0 12.5 12.2" style="position:absolute;left:0;top:0"><rect x="0.6" y="0.6" width="11.3" height="11.0" rx="1.8" fill="url(#gw)" stroke="#262626" stroke-width="1.1"/><path d="M3 2.5 V9.5" stroke="#8a8a8a" stroke-width="1.2"/><path d="M7 3.5 V9 M4.3 6.2 H9.7" stroke="#1e1e1e" stroke-width="1.4"/></svg></div>
<div style="left:189.6px;top:89.3px;width:12.5px;height:12.2px;"><svg width="12.5" height="12.2" viewBox="0 0 12.5 12.2" style="position:absolute;left:0;top:0"><rect x="0.6" y="0.6" width="11.3" height="11.0" rx="1.8" fill="url(#gw)" stroke="#262626" stroke-width="1.1"/><text x="6" y="8.8" text-anchor="middle" font-family="Liberation Sans" font-size="8.5" font-weight="bold" font-style="normal" letter-spacing="-0.7" fill="#1e1e1e">ref</text></svg></div>
<div style="left:189.6px;top:106.4px;width:12.5px;height:12.2px;"><svg width="12.5" height="12.2" viewBox="0 0 12.5 12.2" style="position:absolute;left:0;top:0"><rect x="0.6" y="0.6" width="11.3" height="11.0" rx="1.8" fill="url(#gw)" stroke="#262626" stroke-width="1.1"/><text x="7.5" y="7.8" text-anchor="middle" font-family="Liberation Sans" font-size="7" font-weight="bold" fill="#1e1e1e">A</text><path d="M2.5 9 L3.5 7.5 M3 9.2 H4" stroke="#1e1e1e" stroke-width="0.8"/></svg></div>
<div style="left:191px;top:123.2px;width:10px;height:1.0px;background:#7e7e7e"></div>
<div style="left:189.6px;top:128px;width:12.5px;height:12.2px;"><svg width="12.5" height="12.2" viewBox="0 0 12.5 12.2" style="position:absolute;left:0;top:0"><rect x="0.6" y="0.6" width="11.3" height="11.0" rx="1.8" fill="url(#gw)" stroke="#262626" stroke-width="1.1"/><text x="6" y="9.3" text-anchor="middle" font-family="Liberation Serif" font-size="10" font-weight="bold" font-style="normal" letter-spacing="0" fill="#1e1e1e">B</text></svg></div>
<div style="left:189.6px;top:146.3px;width:12.5px;height:12.2px;"><svg width="12.5" height="12.2" viewBox="0 0 12.5 12.2" style="position:absolute;left:0;top:0"><rect x="0.6" y="0.6" width="11.3" height="11.0" rx="1.8" fill="url(#gw)" stroke="#262626" stroke-width="1.1"/><text x="6" y="9.5" text-anchor="middle" font-family="Liberation Serif" font-size="11" font-weight="bold" font-style="italic" letter-spacing="0" fill="#1e1e1e">i</text></svg></div>
<div style="left:189.6px;top:163.4px;width:12.5px;height:12.2px;"><svg width="12.5" height="12.2" viewBox="0 0 12.5 12.2" style="position:absolute;left:0;top:0"><rect x="0.6" y="0.6" width="11.3" height="11.0" rx="1.8" fill="url(#gw)" stroke="#262626" stroke-width="1.1"/><text x="6" y="9.3" text-anchor="middle" font-family="Liberation Serif" font-size="11.5" font-weight="bold" font-style="italic" letter-spacing="0" fill="#1e1e1e">e</text></svg></div>
<div style="left:189.6px;top:180.4px;width:12.5px;height:12.2px;"><svg width="12.5" height="12.2" viewBox="0 0 12.5 12.2" style="position:absolute;left:0;top:0"><rect x="0.6" y="0.6" width="11.3" height="11.0" rx="1.8" fill="url(#gw)" stroke="#262626" stroke-width="1.1"/><path d="M2.8 3.2 H9.2 M2.8 5.8 H7.5 M2.8 8.4 H9.2" stroke="#1e1e1e" stroke-width="1.3"/></svg></div>
<div style="left:189.6px;top:198px;width:12.5px;height:12.2px;"><svg width="12.5" height="12.2" viewBox="0 0 12.5 12.2" style="position:absolute;left:0;top:0"><rect x="0.6" y="0.6" width="11.3" height="11.0" rx="1.8" fill="url(#gw)" stroke="#262626" stroke-width="1.1"/><path d="M2.8 3 H9.2 M2.8 8.8 H9.2" stroke="#1e1e1e" stroke-width="1.3"/><rect x="2.8" y="4.6" width="6.4" height="2.6" fill="none" stroke="#1e1e1e" stroke-width="1"/></svg></div>
<div style="left:189.6px;top:215.7px;width:12.5px;height:12.2px;"><svg width="12.5" height="12.2" viewBox="0 0 12.5 12.2" style="position:absolute;left:0;top:0"><rect x="0.6" y="0.6" width="11.3" height="11.0" rx="1.8" fill="url(#gw)" stroke="#262626" stroke-width="1.1"/><path d="M2.8 3 H9.2 M4.5 5.8 H9.2 M2.8 8.6 H9.2" stroke="#1e1e1e" stroke-width="1.3"/><path d="M2.8 4.5 V7.2" stroke="#1e1e1e" stroke-width="1"/></svg></div>
<div style="left:191px;top:232.5px;width:10px;height:1.0px;background:#7e7e7e"></div>
<div style="left:189.6px;top:237.3px;width:12.5px;height:12.2px;"><svg width="12.5" height="12.2" viewBox="0 0 12.5 12.2" style="position:absolute;left:0;top:0"><rect x="0.6" y="0.6" width="11.3" height="11.0" rx="1.8" fill="url(#gw)" stroke="#262626" stroke-width="1.1"/><path d="M8.8 2.8 V7 H3.5" fill="none" stroke="#1e1e1e" stroke-width="1.5"/><path d="M5.5 4.6 L3 7 L5.5 9.4" fill="none" stroke="#1e1e1e" stroke-width="1.4"/></svg></div>
<div style="left:191px;top:254.2px;width:10px;height:1.0px;background:#7e7e7e"></div>
<div style="left:189.6px;top:260px;width:12.5px;height:12.2px;"><svg width="12.5" height="12.2" viewBox="0 0 12.5 12.2" style="position:absolute;left:0;top:0"><rect x="0.6" y="0.6" width="11.3" height="11.0" rx="1.8" fill="url(#gw)" stroke="#262626" stroke-width="1.1"/><text x="6" y="8.7" text-anchor="middle" font-family="Liberation Sans" font-size="8.5" font-weight="bold" font-style="normal" letter-spacing="-0.5" fill="#1e1e1e">$$</text></svg></div>
<div style="left:189.6px;top:277.9px;width:12.5px;height:12.2px;"><svg width="12.5" height="12.2" viewBox="0 0 12.5 12.2" style="position:absolute;left:0;top:0"><rect x="0.6" y="0.6" width="11.3" height="11.0" rx="1.8" fill="url(#gw)" stroke="#262626" stroke-width="1.1"/><text x="5" y="7" text-anchor="middle" font-family="Liberation Sans" font-size="7.5" font-weight="bold" fill="#1e1e1e">x</text><rect x="7.3" y="6.8" width="2.6" height="2.8" fill="none" stroke="#555" stroke-width="0.7"/></svg></div>
<div style="left:189.6px;top:295px;width:12.5px;height:12.2px;"><svg width="12.5" height="12.2" viewBox="0 0 12.5 12.2" style="position:absolute;left:0;top:0"><rect x="0.6" y="0.6" width="11.3" height="11.0" rx="1.8" fill="url(#gw)" stroke="#262626" stroke-width="1.1"/><text x="5" y="9.5" text-anchor="middle" font-family="Liberation Sans" font-size="7.5" font-weight="bold" fill="#1e1e1e">x</text><rect x="7.3" y="2.2" width="2.6" height="2.8" fill="none" stroke="#555" stroke-width="0.7"/></svg></div>
<div style="left:189.6px;top:312.5px;width:12.5px;height:12.2px;"><svg width="12.5" height="12.2" viewBox="0 0 12.5 12.2" style="position:absolute;left:0;top:0"><rect x="0.6" y="0.6" width="11.3" height="11.0" rx="1.8" fill="url(#gw)" stroke="#262626" stroke-width="1.1"/><path d="M2.5 6 H9.5" stroke="#1e1e1e" stroke-width="1.1"/><circle cx="6" cy="3.6" r="0.95" fill="#1e1e1e"/><circle cx="6" cy="8.4" r="0.95" fill="#1e1e1e"/></svg></div>
<div style="left:189.6px;top:329.6px;width:12.5px;height:12.2px;"><svg width="12.5" height="12.2" viewBox="0 0 12.5 12.2" style="position:absolute;left:0;top:0"><rect x="0.6" y="0.6" width="11.3" height="11.0" rx="1.8" fill="url(#gw)" stroke="#262626" stroke-width="1.1"/><path d="M2.5 6 H9.5" stroke="#1e1e1e" stroke-width="1"/><rect x="4.7" y="2.3" width="2.6" height="2.4" fill="none" stroke="#555" stroke-width="0.7"/><rect x="4.7" y="7.3" width="2.6" height="2.4" fill="none" stroke="#555" stroke-width="0.7"/></svg></div>
<div style="left:189.6px;top:346.7px;width:12.5px;height:12.2px;"><svg width="12.5" height="12.2" viewBox="0 0 12.5 12.2" style="position:absolute;left:0;top:0"><rect x="0.6" y="0.6" width="11.3" height="11.0" rx="1.8" fill="url(#gw)" stroke="#262626" stroke-width="1.1"/><path d="M2.3 6.5 L3.8 5.8 L5.5 9.5 L7.6 2.5 H10" fill="none" stroke="#1e1e1e" stroke-width="1.2"/></svg></div>
<div style="left:0;top:0;width:1248px;height:675px;overflow:hidden"><svg width="1248" height="675" style="position:absolute;left:0;top:0"><text x="790.1" y="92.6" font-family="Liberation Serif" font-size="11.5" font-weight="bold" font-style="normal" fill="#1a1a1a" stroke="#1a1a1a" stroke-width="0.18" >1</text><text x="809.6" y="92.6" font-family="Liberation Serif" font-size="11.5" font-weight="bold" font-style="normal" fill="#1a1a1a" stroke="#1a1a1a" stroke-width="0.18" textLength="26.7" lengthAdjust="spacingAndGlyphs" >Lists</text><text x="799.5" y="110.8" font-family="Liberation Serif" font-size="9" font-weight="normal" font-style="normal" fill="#1a1a1a" stroke="#1a1a1a" stroke-width="0.18" >1.</text><text x="810.3" y="110.8" font-family="Liberation Serif" font-size="9" font-weight="bold" font-style="normal" fill="#1a1a1a" stroke="#1a1a1a" stroke-width="0.18" textLength="95" lengthAdjust="spacingAndGlyphs" >First Point (Bold Face)</text><text x="799.5" y="126.2" font-family="Liberation Serif" font-size="9" font-weight="normal" font-style="normal" fill="#1a1a1a" stroke="#1a1a1a" stroke-width="0.18" >2.</text><text x="810.3" y="126.2" font-family="Liberation Serif" font-size="9" font-weight="normal" font-style="italic" fill="#1a1a1a" stroke="#1a1a1a" stroke-width="0.18" textLength="74.6" lengthAdjust="spacingAndGlyphs" >Second Point (Italic)</text><text x="799.5" y="145.7" font-family="Liberation Serif" font-size="8.5" font-weight="normal" font-style="normal" fill="#1a1a1a" stroke="#1a1a1a" stroke-width="0.18" >3.</text><text x="810.3" y="145.7" font-family="Liberation Serif" font-size="13" font-weight="normal" font-style="normal" fill="#1a1a1a" stroke="#1a1a1a" stroke-width="0.18" textLength="126.6" lengthAdjust="spacingAndGlyphs" >Third Point (Large Font)</text><text x="814" y="161.6" font-family="Liberation Serif" font-size="9" font-weight="normal" font-style="normal" fill="#1a1a1a" stroke="#1a1a1a" stroke-width="0.18" textLength="9.5" lengthAdjust="spacingAndGlyphs" >(a)</text><text x="828.3" y="161.6" font-family="Liberation Serif" font-size="8.3" font-weight="normal" font-style="normal" fill="#1a1a1a" stroke="#1a1a1a" stroke-width="0.18" textLength="91.7" lengthAdjust="spacingAndGlyphs" >First Subpoint (Small Font)</text><text x="813.3" y="175.8" font-family="Liberation Serif" font-size="9" font-weight="normal" font-style="normal" fill="#1a1a1a" stroke="#1a1a1a" stroke-width="0.18" textLength="10" lengthAdjust="spacingAndGlyphs" >(b)</text><text x="827.7" y="175.8" font-family="Liberation Serif" font-size="4.8" font-weight="bold" font-style="normal" fill="#1a1a1a" stroke="#1a1a1a" stroke-width="0.18" textLength="72" lengthAdjust="spacingAndGlyphs" >Second Subpoint (Tiny Font)</text><text x="813.7" y="196" font-family="Liberation Serif" font-size="9" font-weight="normal" font-style="normal" fill="#1a1a1a" stroke="#1a1a1a" stroke-width="0.18" textLength="9.5" lengthAdjust="spacingAndGlyphs" >(c)</text><text x="828.8" y="196" font-family="Liberation Serif" font-size="20.5" font-weight="normal" font-style="normal" fill="#1a1a1a" stroke="#1a1a1a" stroke-width="0.18" textLength="229.1" lengthAdjust="spacingAndGlyphs" >Third Subpoint (Huge Font)</text><circle cx="804" cy="211.8" r="1.6" fill="#1a1a1a"/><text x="810.2" y="214.7" font-family="Liberation Sans" font-size="8.8" font-weight="normal" font-style="normal" fill="#1a1a1a" stroke="#1a1a1a" stroke-width="0.18" textLength="83.8" lengthAdjust="spacingAndGlyphs" >Bullet Point (Sans Serif)</text><circle cx="804" cy="228.3" r="1.6" fill="none" stroke="#1a1a1a" stroke-width="0.7"/><text x="810" y="231" font-family="Liberation Serif" font-size="9" font-weight="normal" font-style="normal" fill="#1a1a1a" stroke="#1a1a1a" stroke-width="0.18" textLength="110.7" lengthAdjust="spacingAndGlyphs" >C<tspan font-size="7">IRCLE</tspan> P<tspan font-size="7">OINT</tspan> (S<tspan font-size="7">MALL</tspan> C<tspan font-size="7">APS</tspan>)</text><text x="789.6" y="258.75" font-family="Liberation Serif" font-size="11.5" font-weight="bold" font-style="normal" fill="#1a1a1a" stroke="#1a1a1a" stroke-width="0.18" >2</text><text x="810" y="258.75" font-family="Liberation Serif" font-size="11.5" font-weight="bold" font-style="normal" fill="#1a1a1a" stroke="#1a1a1a" stroke-width="0.18" textLength="56.5" lengthAdjust="spacingAndGlyphs" >Equations</text><text x="789.6" y="278" font-family="Liberation Serif" font-size="10" font-weight="bold" font-style="normal" fill="#1a1a1a" stroke="#1a1a1a" stroke-width="0.18" textLength="13.2" lengthAdjust="spacingAndGlyphs" >2.1</text><text x="815.6" y="278" font-family="Liberation Serif" font-size="10" font-weight="bold" font-style="normal" fill="#1a1a1a" stroke="#1a1a1a" stroke-width="0.18" textLength="88.2" lengthAdjust="spacingAndGlyphs" >Binomial Theorem</text><text x="789.6" y="292.9" font-family="Liberation Serif" font-size="9" font-weight="bold" font-style="normal" fill="#1a1a1a" stroke="#1a1a1a" stroke-width="0.18" textLength="131" lengthAdjust="spacingAndGlyphs" >Theorem 1 (Binomial Theorem)</text><text x="926" y="292.9" font-family="Liberation Serif" font-size="9" font-weight="normal" font-style="italic" fill="#1a1a1a" stroke="#1a1a1a" stroke-width="0.18" textLength="140" lengthAdjust="spacingAndGlyphs" >For any nonnegative integer n, we have</text><text x="920.8" y="317.8" font-family="Liberation Serif" font-size="9" font-weight="normal" font-style="normal" fill="#1a1a1a" stroke="#1a1a1a" stroke-width="0.18" textLength="22.9" lengthAdjust="spacingAndGlyphs" >(1 + <tspan font-style="italic">x</tspan>)</text><text x="945" y="314.6" font-family="Liberation Serif" font-size="5.5" font-weight="normal" font-style="italic" fill="#1a1a1a" stroke="#1a1a1a" stroke-width="0.18" >n</text><path d="M952.5 314.3 H958 M952.5 316.7 H958" stroke="#1a1a1a" stroke-width="0.75" fill="none"/><path d="M972.1 311.2 V309.6 H961.8 L967.3 315.6 L961.8 321.6 H972.1 V320" fill="none" stroke="#1a1a1a" stroke-width="0.95"/><text x="965.3" y="308.2" font-family="Liberation Serif" font-size="5.5" font-weight="normal" font-style="italic" fill="#1a1a1a" stroke="#1a1a1a" stroke-width="0.18" >n</text><text x="962" y="327.8" font-family="Liberation Serif" font-size="5.5" font-weight="normal" font-style="italic" fill="#1a1a1a" stroke="#1a1a1a" stroke-width="0.18" textLength="10.5" lengthAdjust="spacingAndGlyphs" >i=0</text><path d="M978.8 305.8 Q974.3 315.6 978.8 325.4" stroke="#1a1a1a" stroke-width="0.9" fill="none"/><path d="M984.6 305.8 Q989.1 315.6 984.6 325.4" stroke="#1a1a1a" stroke-width="0.9" fill="none"/><text x="979.8" y="313" font-family="Liberation Serif" font-size="6.3" font-weight="normal" font-style="italic" fill="#1a1a1a" stroke="#1a1a1a" stroke-width="0.18" >n</text><text x="981" y="323.6" font-family="Liberation Serif" font-size="6.3" font-weight="normal" font-style="italic" fill="#1a1a1a" stroke="#1a1a1a" stroke-width="0.18" >i</text><text x="990.8" y="317.8" font-family="Liberation Serif" font-size="9" font-weight="normal" font-style="italic" fill="#1a1a1a" stroke="#1a1a1a" stroke-width="0.18" >x</text><text x="995.8" y="313.8" font-family="Liberation Serif" font-size="5.5" font-weight="normal" font-style="italic" fill="#1a1a1a" stroke="#1a1a1a" stroke-width="0.18" >i</text><text x="790" y="346.7" font-family="Liberation Serif" font-size="10" font-weight="bold" font-style="normal" fill="#1a1a1a" stroke="#1a1a1a" stroke-width="0.18" textLength="13.2" lengthAdjust="spacingAndGlyphs" >2.2</text><text x="814.6" y="346.7" font-family="Liberation Serif" font-size="10" font-weight="bold" font-style="normal" fill="#1a1a1a" stroke="#1a1a1a" stroke-width="0.18" textLength="62" lengthAdjust="spacingAndGlyphs" >Taylor Series</text><text x="790" y="361.7" font-family="Liberation Serif" font-size="9" font-weight="normal" font-style="normal" fill="#1a1a1a" stroke="#1a1a1a" stroke-width="0.18" textLength="209.2" lengthAdjust="spacingAndGlyphs" >The Taylor series expansion for the function <tspan font-style="italic">e</tspan><tspan font-size="5.5" dy="-3" font-style="italic">x</tspan><tspan dy="3"> is given by</tspan></text><text x="892.8" y="385.6" font-family="Liberation Serif" font-size="9" font-weight="normal" font-style="italic" fill="#1a1a1a" stroke="#1a1a1a" stroke-width="0.18" >e</text><text x="897.5" y="382" font-family="Liberation Serif" font-size="5.5" font-weight="normal" font-style="italic" fill="#1a1a1a" stroke="#1a1a1a" stroke-width="0.18" >x</text><path d="M903 382.3 H909 M903 384.6 H909" stroke="#1a1a1a" stroke-width="0.75" fill="none"/><text x="912" y="385.6" font-family="Liberation Serif" font-size="9" font-weight="normal" font-style="normal" fill="#1a1a1a" stroke="#1a1a1a" stroke-width="0.18" >1</text><text x="916.9" y="385.6" font-family="Liberation Serif" font-size="9" font-weight="normal" font-style="normal" fill="#1a1a1a" stroke="#1a1a1a" stroke-width="0.18" textLength="6" lengthAdjust="spacingAndGlyphs" >+</text><text x="925.9" y="385.6" font-family="Liberation Serif" font-size="9" font-weight="normal" font-style="italic" fill="#1a1a1a" stroke="#1a1a1a" stroke-width="0.18" >x</text><text x="933" y="385.6" font-family="Liberation Serif" font-size="9" font-weight="normal" font-style="normal" fill="#1a1a1a" stroke="#1a1a1a" stroke-width="0.18" textLength="6" lengthAdjust="spacingAndGlyphs" >+</text><text x="942.5" y="380.3" font-family="Liberation Serif" font-size="6.5" font-weight="normal" font-style="italic" fill="#1a1a1a" stroke="#1a1a1a" stroke-width="0.18" >x</text><text x="946.8" y="377.6" font-family="Liberation Serif" font-size="4.8" font-weight="normal" font-style="normal" fill="#1a1a1a" stroke="#1a1a1a" stroke-width="0.18" >2</text><path d="M941.5 383 H950" stroke="#1a1a1a" stroke-width="0.55" fill="none"/><text x="943.5" y="391.4" font-family="Liberation Serif" font-size="6.8" font-weight="normal" font-style="normal" fill="#1a1a1a" stroke="#1a1a1a" stroke-width="0.18" >2</text><text x="952.9" y="385.6" font-family="Liberation Serif" font-size="9" font-weight="normal" font-style="normal" fill="#1a1a1a" stroke="#1a1a1a" stroke-width="0.18" textLength="6" lengthAdjust="spacingAndGlyphs" >+</text><text x="963" y="380.3" font-family="Liberation Serif" font-size="6.5" font-weight="normal" font-style="italic" fill="#1a1a1a" stroke="#1a1a1a" stroke-width="0.18" >x</text><text x="967.3" y="377.6" font-family="Liberation Serif" font-size="4.8" font-weight="normal" font-style="normal" fill="#1a1a1a" stroke="#1a1a1a" stroke-width="0.18" >3</text><path d="M961.9 383 H970.3" stroke="#1a1a1a" stroke-width="0.55" fill="none"/><text x="963.8" y="391.4" font-family="Liberation Serif" font-size="6.8" font-weight="normal" font-style="normal" fill="#1a1a1a" stroke="#1a1a1a" stroke-width="0.18" >6</text><text x="973.3" y="385.6" font-family="Liberation Serif" font-size="9" font-weight="normal" font-style="normal" fill="#1a1a1a" stroke="#1a1a1a" stroke-width="0.18" textLength="6" lengthAdjust="spacingAndGlyphs" >+</text><text x="980" y="385.6" font-family="Liberation Serif" font-size="9" font-weight="normal" font-style="normal" fill="#1a1a1a" stroke="#1a1a1a" stroke-width="0.18" textLength="10.8" lengthAdjust="spacingAndGlyphs" >&#183;&#183;&#183;</text><path d="M993.2 382.3 H998.6 M993.2 384.6 H998.6" stroke="#1a1a1a" stroke-width="0.75" fill="none"/><path d="M1012.4 378.6 V377 H1001.2 L1007 383 L1001.2 389 H1012.4 V387.4" fill="none" stroke="#1a1a1a" stroke-width="0.95"/><text x="1001.6" y="396.3" font-family="Liberation Serif" font-size="5.3" font-weight="normal" font-style="italic" fill="#1a1a1a" stroke="#1a1a1a" stroke-width="0.18" textLength="12.6" lengthAdjust="spacingAndGlyphs" >n&#8805;0</text><text x="1017.3" y="380.3" font-family="Liberation Serif" font-size="6.5" font-weight="normal" font-style="italic" fill="#1a1a1a" stroke="#1a1a1a" stroke-width="0.18" >x</text><text x="1021.5" y="377.6" font-family="Liberation Serif" font-size="4.8" font-weight="normal" font-style="italic" fill="#1a1a1a" stroke="#1a1a1a" stroke-width="0.18" >n</text><path d="M1016 383 H1025" stroke="#1a1a1a" stroke-width="0.55" fill="none"/><text x="1017" y="391.4" font-family="Liberation Serif" font-size="6.8" font-weight="normal" font-style="italic" fill="#1a1a1a" stroke="#1a1a1a" stroke-width="0.18" >n!</text><text x="1119" y="387" font-family="Liberation Serif" font-size="9" font-weight="normal" font-style="normal" fill="#1a1a1a" stroke="#1a1a1a" stroke-width="0.18" textLength="10.6" lengthAdjust="spacingAndGlyphs" >(1)</text><text x="956.8" y="436.5" font-family="Liberation Serif" font-size="8.5" font-weight="normal" font-style="normal" fill="#1a1a1a" stroke="#1a1a1a" stroke-width="0.18" >1</text><text x="790.1" y="606.8" font-family="Liberation Serif" font-size="10" font-weight="bold" font-style="normal" fill="#1a1a1a" stroke="#1a1a1a" stroke-width="0.18" textLength="13.2" lengthAdjust="spacingAndGlyphs" >2.3</text><text x="814.8" y="606.8" font-family="Liberation Serif" font-size="10" font-weight="bold" font-style="normal" fill="#1a1a1a" stroke="#1a1a1a" stroke-width="0.18" textLength="19" lengthAdjust="spacingAndGlyphs" >Sets</text><text x="790" y="621" font-family="Liberation Serif" font-size="9" font-weight="bold" font-style="normal" fill="#1a1a1a" stroke="#1a1a1a" stroke-width="0.18" textLength="43.8" lengthAdjust="spacingAndGlyphs" >Theorem 2</text><text x="838.8" y="621" font-family="Liberation Serif" font-size="9" font-weight="normal" font-style="italic" fill="#1a1a1a" stroke="#1a1a1a" stroke-width="0.18" textLength="122.9" lengthAdjust="spacingAndGlyphs" >For any sets A, B and C, we have</text><text x="898.5" y="639.8" font-family="Liberation Serif" font-size="9" font-weight="normal" font-style="normal" fill="#1a1a1a" stroke="#1a1a1a" stroke-width="0.18" textLength="122" lengthAdjust="spacingAndGlyphs" >(<tspan font-style="italic">A</tspan> <tspan font-family="Liberation Sans" font-size="8">U</tspan> <tspan font-style="italic">B</tspan>) &#8722; (<tspan font-style="italic">C</tspan> &#8722; <tspan font-style="italic">A</tspan>) = <tspan font-style="italic">A</tspan> <tspan font-family="Liberation Sans" font-size="8">U</tspan> (<tspan font-style="italic">B</tspan> &#8722; <tspan font-style="italic">C</tspan>)</text><text x="790" y="657.3" font-family="Liberation Serif" font-size="9" font-weight="bold" font-style="normal" fill="#1a1a1a" stroke="#1a1a1a" stroke-width="0.18" textLength="24.8" lengthAdjust="spacingAndGlyphs" >Proof:</text><text x="878.7" y="676.2" font-family="Liberation Serif" font-size="9" font-weight="normal" font-style="normal" fill="#1a1a1a" stroke="#1a1a1a" stroke-width="0.18" textLength="157" lengthAdjust="spacingAndGlyphs" >(<tspan font-style="italic">A</tspan><tspan font-family="Liberation Sans" font-size="8">U</tspan><tspan font-style="italic">B</tspan>) &#8722; (<tspan font-style="italic">C</tspan> &#8722; <tspan font-style="italic">A</tspan>)   =   (<tspan font-style="italic">A</tspan><tspan font-family="Liberation Sans" font-size="8">U</tspan><tspan font-style="italic">B</tspan>)&#8745;(<tspan font-style="italic">C</tspan> &#8722; <tspan font-style="italic">A</tspan>)<tspan font-size="5.5" dy="-3">c</tspan></text></svg></div></body></html>
